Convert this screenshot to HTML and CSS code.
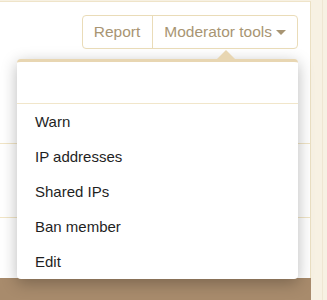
FILE: index.html
```html
<!DOCTYPE html>
<html>
<head>
<meta charset="utf-8">
<link rel="stylesheet" href="styles.css">
</head>
<body>
<div class="page">
  <div class="main">
    <div class="block">
      <div class="actions">
        <div class="btn-group">
          <span class="btn">Report</span>
          <span class="btn">Moderator tools <span class="caret"></span></span>
        </div>
      </div>
      <div class="row row-a"></div>
      <div class="row row-b"></div>
      <div class="row row-c"></div>
    </div>
    <div class="footer-band"></div>
  </div>
  <div class="sidebar"></div>

  <div class="menu">
    <div class="menu-arrow"></div>
    <div class="menu-header"></div>
    <ul class="menu-list">
      <li>Warn</li>
      <li>IP addresses</li>
      <li>Shared IPs</li>
      <li>Ban member</li>
      <li>Edit</li>
    </ul>
  </div>
</div>
</body>
</html>
```

FILE: styles.css
```css
* { box-sizing: border-box; }
html, body { margin: 0; padding: 0; }
body {
  font-family: "Liberation Sans", Arial, sans-serif;
  background: #f7f1e3;
  width: 327px;
  height: 300px;
  overflow: hidden;
}
.page {
  position: relative;
  display: flex;
  height: 300px;
}
.main {
  width: 311px;
  display: flex;
  flex-direction: column;
}
.block {
  flex: 1;
  background: #fff;
  border-top: 1px solid #efe4c9;
  border-right: 1px solid #ebe0c3;
  margin-top: 1px;
  display: flex;
  flex-direction: column;
}
.actions {
  display: flex;
  justify-content: flex-end;
  padding: 13px 12px 0 0;
}
.btn-group {
  display: flex;
  border: 1px solid #eadcb8;
  border-radius: 4px;
  height: 34px;
}
.btn {
  display: flex;
  align-items: center;
  font-size: 15.5px;
  color: #a89573;
  padding: 0 12px 0 11px;
}
.btn + .btn {
  border-left: 1px solid #eadcb8;
  padding: 0 11px 0 11px;
}
.caret {
  display: inline-block;
  margin-left: 4px;
  margin-top: 1px;
  border-left: 5px solid transparent;
  border-right: 5px solid transparent;
  border-top: 5px solid #a89573;
}
.row { border-bottom: 1px solid #f1e5c6; }
.row-a { height: 95px; }
.row-b { height: 74px; }
.row-c { flex: 1; border-bottom: none; }
.footer-band {
  height: 22px;
  background: #a88b6c;
}
.sidebar {
  flex: 1;
  border-right: 1px solid #efe6d2;
  margin-right: 4px;
  background: #f7f1e3;
}
.menu {
  position: absolute;
  left: 17px;
  top: 59px;
  width: 281px;
  background: #fff;
  border-top: 3px solid #e8d6b2;
  border-radius: 4px;
  box-shadow: 0 4px 16px rgba(0, 0, 0, 0.28);
}
.menu-arrow {
  position: absolute;
  left: 200px;
  top: -12px;
  width: 0;
  height: 0;
  border-left: 9px solid transparent;
  border-right: 9px solid transparent;
  border-bottom: 9px solid #e8d6b2;
}
.menu-header {
  height: 42px;
  border-bottom: 1px solid #f1e6ca;
}
.menu-list {
  list-style: none;
  margin: 0;
  padding: 0;
}
.menu-list li {
  height: 35px;
  display: flex;
  align-items: center;
  padding-left: 18px;
  font-size: 15px;
  color: #1f1f1f;
}
```
